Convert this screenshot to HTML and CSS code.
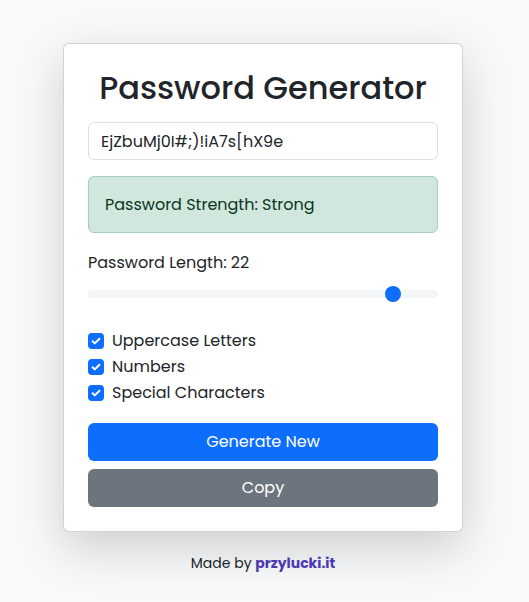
FILE: index.html
```html
<!DOCTYPE html>
<html lang="en">
<head>
<meta charset="utf-8">
<title>Password Generator</title>
<link rel="stylesheet" href="styles.css">
</head>
<body>
<main class="page">
  <section class="card">
    <h1 class="title">Password Generator</h1>
    <input class="pw" type="text" value="EjZbuMj0I#;)!iA7s[hX9e" readonly>
    <div class="alert">Password Strength: Strong</div>
    <label class="len" for="len">Password Length: 22</label>
    <input class="range" id="len" type="range" min="6" max="24" value="22">
    <div class="checks">
      <label class="check"><span class="box"><svg viewBox="0 0 16 16" width="16" height="16"><path d="M4.6 8.2l2.2 2.2 4.6-4.6" fill="none" stroke="#fff" stroke-width="2" stroke-linecap="round" stroke-linejoin="round"/></svg></span>Uppercase Letters</label>
      <label class="check"><span class="box"><svg viewBox="0 0 16 16" width="16" height="16"><path d="M4.6 8.2l2.2 2.2 4.6-4.6" fill="none" stroke="#fff" stroke-width="2" stroke-linecap="round" stroke-linejoin="round"/></svg></span>Numbers</label>
      <label class="check"><span class="box"><svg viewBox="0 0 16 16" width="16" height="16"><path d="M4.6 8.2l2.2 2.2 4.6-4.6" fill="none" stroke="#fff" stroke-width="2" stroke-linecap="round" stroke-linejoin="round"/></svg></span>Special Characters</label>
    </div>
    <div class="actions">
      <button class="btn btn-primary" type="button">Generate New</button>
      <button class="btn btn-secondary" type="button">Copy</button>
    </div>
  </section>
  <p class="footer">Made by <a class="link" href="#">przylucki.it</a></p>
</main>
</body>
</html>
```
FILE: styles.css
```css
* { box-sizing: border-box; }
html, body { margin: 0; padding: 0; }
html { background: #f8f9fa; }
body {
  min-height: 100vh;
  background: #f8f9fa;
  font-family: "Poppins", "Inter", "Noto Sans", sans-serif;
  color: #212529;
  font-size: 16px;
  line-height: 1.5;
}
.page {
  display: flex;
  flex-direction: column;
  align-items: center;
  padding-top: 43px;
  padding-right: 3px;
}
.card {
  width: 400px;
  background: #fff;
  border: 1px solid rgba(0,0,0,.175);
  border-radius: 6px;
  box-shadow: 0 1rem 3rem rgba(0,0,0,.175);
  padding: 23px 24px 24px;
  display: flex;
  flex-direction: column;
}
.title {
  margin: 0 0 14px;
  font-size: 32px;
  font-weight: 500;
  line-height: 40px;
  text-align: center;
  padding-top: 1px;
}
.pw {
  display: block;
  width: 100%;
  height: 38px;
  border: 1px solid #dee2e6;
  border-radius: 6px;
  padding: 6px 12px;
  font: inherit;
  color: #212529;
  background: #fff;
  outline: none;
  margin-bottom: 16px;
}
.alert {
  background: #d1e7dd;
  border: 1px solid #a3cfbb;
  color: #0a3622;
  border-radius: 6px;
  padding: 16px;
  height: 57px;
  margin-bottom: 18px;
}
.len {
  display: block;
  margin-bottom: 7px;
}
.range {
  -webkit-appearance: none;
  appearance: none;
  display: block;
  width: 100%;
  height: 24px;
  margin: 0 0 23px;
  padding: 0;
  background: transparent;
}
.range::-webkit-slider-runnable-track {
  height: 8px;
  background: #f4f5f6;
  border-radius: 16px;
}
.range::-webkit-slider-thumb {
  -webkit-appearance: none;
  appearance: none;
  width: 16px;
  height: 16px;
  margin-top: -4px;
  border-radius: 50%;
  background: #0d6efd;
  border: 0;
}
.checks {
  display: flex;
  flex-direction: column;
  gap: 2px;
  margin-bottom: 18px;
}
.check {
  display: flex;
  align-items: center;
  gap: 8px;
  height: 24px;
}
.box {
  width: 16px;
  height: 16px;
  border-radius: 4px;
  background: #0d6efd;
  display: flex;
}
.actions {
  display: flex;
  flex-direction: column;
  gap: 8px;
}
.btn {
  display: block;
  width: 100%;
  height: 38px;
  border: 0;
  border-radius: 6px;
  color: #fff;
  font: inherit;
  padding: 0;
  cursor: pointer;
}
.btn-primary { background: #0d6efd; }
.btn-secondary { background: #6c757d; }
.footer {
  margin: 21px 0 0;
  font-size: 14px;
  text-align: center;
}
.link {
  color: #4c38b0;
  font-weight: 700;
  text-decoration: none;
}
```
